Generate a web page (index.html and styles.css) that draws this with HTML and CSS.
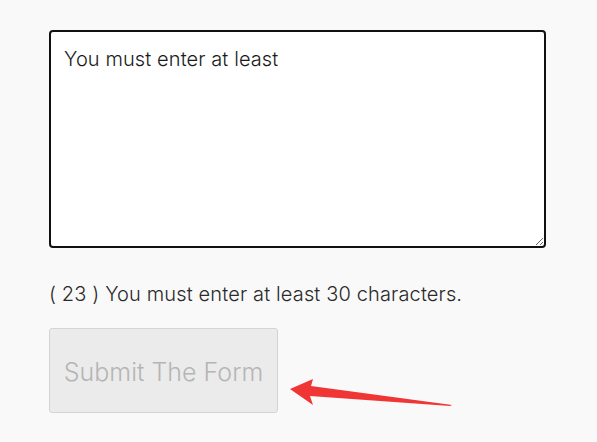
FILE: index.html
```html
<!DOCTYPE html>
<html>
<head>
<meta charset="utf-8">
<link rel="stylesheet" href="styles.css">
</head>
<body>
<main class="form">
  <textarea class="field">You must enter at least</textarea>
  <p class="hint">( 23 ) You must enter at least 30 characters.</p>
  <div class="actions">
    <button class="submit" disabled>Submit The Form</button>
    <svg class="arrow" width="170" height="40" viewBox="0 0 170 40">
      <path d="M0 19 L23 9 L21 16 L162 35 L160 36 L20 26 L23 35 Z" fill="#f03535"/>
    </svg>
  </div>
</main>
</body>
</html>
```
FILE: styles.css
```css
html, body {
  margin: 0;
  background: #f9f9f9;
}
.form {
  padding: 30px 0 0 49px;
  font-family: Inter, "Noto Sans", sans-serif;
}
.field {
  display: block;
  box-sizing: border-box;
  width: 497px;
  height: 218px;
  margin: 0;
  padding: 12px 13px;
  border: 2px solid #111;
  border-radius: 4px;
  background: #fff;
  font-family: Inter, "Noto Sans", sans-serif;
  font-size: 20px;
  font-weight: 300;
  letter-spacing: 0.1px;
  line-height: 1.5;
  color: #1a1a1a;
  resize: both;
  outline: none;
}
.hint {
  margin: 33px 0 0;
  font-size: 20px;
  font-weight: 300;
  letter-spacing: 0.14px;
  line-height: 26px;
  color: #2a2a2a;
}
.actions {
  display: flex;
  align-items: flex-start;
  margin-top: 21px;
}
.submit {
  box-sizing: border-box;
  width: 229px;
  height: 85px;
  border: 1px solid #d4d4d4;
  border-radius: 3px;
  background: #ebebeb;
  font-family: Inter, "Noto Sans", sans-serif;
  font-size: 25px;
  font-weight: 300;
  color: #b5b5b5;
  padding: 2px 0 0;
}
.arrow {
  margin: 42px 0 0 12px;
}
```
